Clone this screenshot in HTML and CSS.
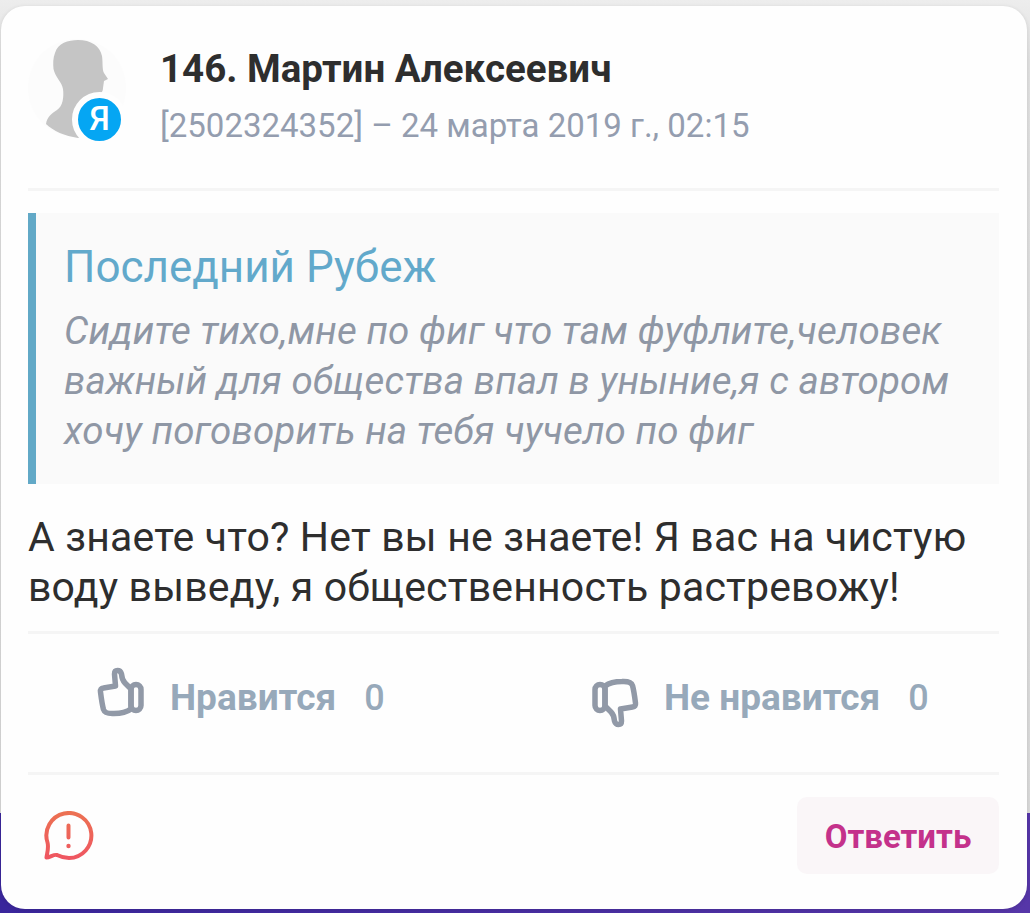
FILE: index.html
```html
<!DOCTYPE html>
<html lang="ru">
<head>
    <meta charset="UTF-8">
    <meta name="viewport" content="width=device-width, initial-scale=1.0">
    <title>Мартин Алексеевич</title>
    <link rel="stylesheet" href="styles.css">
</head>
<body>
    <div class="comment">
        <div class="header">
            <div class="avatar">
                <svg class="avatar-img" viewBox="0 0 98 100">
                    <circle cx="49" cy="50" r="49" fill="#fcfcfc"/>
                    <path fill="#c5c5c5" d="M27 15 C30 5 40 2 50 2 C63 2 72 8 74 18 C75 25 74 31 76 35 L80 41 L76 43 L75 50 C75 54 73 55 70 56 L70 95 L50 100 C37 98 25 93 18 86 C19 79 24 75 29 72 C35 68 36 59 35 51 C34 44 27 39 25.500 31 C25 25 25 20 27 15 Z"/>
                </svg>
                <div class="badge">Я</div>
            </div>
            <div>
                <div class="name">146. Мартин Алексеевич</div>
                <div class="meta">[2502324352] – 24 марта 2019 г., 02:15</div>
            </div>
        </div>
        <div class="quote">
            <div class="quote-author">Последний Рубеж</div>
            <div class="quote-text">Сидите тихо,мне по фиг что там фуфлите,человек<br>важный для общества впал в уныние,я с автором<br>хочу поговорить на тебя чучело по фиг</div>
        </div>
        <div class="text">А знаете что? Нет вы не знаете! Я вас на чистую<br>воду выведу, я общественность растревожу!</div>
        <div class="votes">
            <div class="vote">
                <svg class="vote-icon" viewBox="0 0 48 50">
                    <path d="M3.500 22 Q3 18.500 6.500 18 L18.500 16 L17.500 4 Q17.500 0.500 20.500 0.500 Q23.500 0.500 24.500 4 Q25 10 28 13 L34 19 V39 Q28 43.500 17 43.500 Q8 44 6.500 39.500 Q5 34 3.500 22 Z"/>
                    <rect x="34" y="14.500" width="10" height="26" rx="5"/>
                </svg>
                <span class="vote-label">Нравится</span>
                <span class="vote-count">0</span>
            </div>
            <div class="vote">
                <svg class="vote-icon dislike" viewBox="0 0 48 50">
                    <path d="M3.500 22 Q3 18.500 6.500 18 L18.500 16 L17.500 4 Q17.500 0.500 20.500 0.500 Q23.500 0.500 24.500 4 Q25 10 28 13 L34 19 V39 Q28 43.500 17 43.500 Q8 44 6.500 39.500 Q5 34 3.500 22 Z"/>
                    <rect x="34" y="14.500" width="10" height="26" rx="5"/>
                </svg>
                <span class="vote-label">Не нравится</span>
                <span class="vote-count">0</span>
            </div>
        </div>
        <div class="footer">
            <svg class="report" viewBox="0 0 50 50">
                <defs>
                    <linearGradient id="reportColor" gradientUnits="userSpaceOnUse" x1="0" y1="0" x2="0" y2="50">
                        <stop offset="0" stop-color="#ec7252"/>
                        <stop offset="1" stop-color="#ef5562"/>
                    </linearGradient>
                </defs>
                <g fill="none" stroke="url(#reportColor)" stroke-width="4" stroke-linecap="round" stroke-linejoin="round">
                    <path d="M13 44 C17 46 20 47 25 47 A22.500 22.500 0 1 0 3.500 31.500 C5 37 3 42 2.500 46.500 C6 46.500 10 43 13 44 Z"/>
                    <path d="M24.500 14.500 L24.490 26.500"/>
                </g>
                <circle cx="24.500" cy="35" r="2.200" fill="url(#reportColor)"/>
            </svg>
            <button class="reply">Ответить</button>
        </div>
    </div>
</body>
</html>
```
FILE: styles.css
```css
* {
    box-sizing: border-box;
}
body {
    margin: 0;
    height: 913px;
    padding: 6px 3px 4px 1px;
    overflow: hidden;
    font-family: Roboto, sans-serif;
    background: linear-gradient(#ededed, #e0e0e0 60px, #d9d9d9 813px, transparent 813px), linear-gradient(90deg, #3a269c, #5636a8);
}
.comment {
    height: 903px;
    padding: 0 28px 0 27px;
    background-color: #fefefe;
    border-radius: 24px;
    box-shadow: 0 1px 4px rgba(0, 0, 0, 0.12);
}
.header {
    display: flex;
    height: 185px;
    padding-top: 32px;
    border-bottom: 3px solid #f5f5f5;
}
.avatar {
    position: relative;
    width: 100px;
    height: 100px;
    margin-right: 32px;
}
.avatar-img {
    display: block;
    width: 98px;
    height: 100px;
}
.badge {
    position: absolute; /* sits over the avatar corner */
    left: 44px;
    top: 54px;
    width: 55px;
    height: 55px;
    border: 6px solid #fefefe;
    border-radius: 50%;
    background-color: #05a6f3;
    color: white;
    font-size: 33px;
    font-weight: 500;
    line-height: 41px;
    text-align: center;
}
.name {
    margin-top: 6px;
    font-size: 38.5px;
    font-weight: 700;
    line-height: 50px;
    color: #2e2e2e;
    white-space: nowrap;
}
.meta {
    margin-top: 7px;
    font-size: 33px;
    line-height: 50px;
    color: #949daf;
    white-space: nowrap;
}
.quote {
    height: 271px;
    margin-top: 22px;
    padding: 28px;
    border-left: 8px solid #62a9c7;
    background-color: #fafafa;
    white-space: nowrap;
}
.quote-author {
    font-size: 44px;
    line-height: 52px;
    color: #62a9cb;
}
.quote-text {
    margin-top: 13px;
    font-size: 38.5px;
    font-style: italic;
    letter-spacing: 0.12px;
    line-height: 50px;
    color: #8f97a5;
}
.text {
    margin-top: 28px;
    font-size: 41px;
    letter-spacing: 0.18px;
    line-height: 50px;
    color: #2e2e2e;
    white-space: nowrap;
}
.votes {
    display: flex;
    height: 144px;
    margin-top: 19px;
    border-top: 3px solid #f5f5f5;
    border-bottom: 3px solid #f5f5f5;
}
.vote {
    display: flex;
    flex: none;
    width: 494px;
    padding: 36px 0 0 69px;
    line-height: 56px;
    color: #97a9ba;
    white-space: nowrap;
}
.vote-icon {
    flex: none;
    width: 48px;
    height: 50px;
    margin-right: 25px;
    overflow: visible;
    fill: none;
    stroke: #9199a7;
    stroke-width: 5.500;
    stroke-linejoin: round;
}
.dislike {
    margin-top: 5px;
    transform: rotate(180deg);
}
.vote-label {
    font-size: 37px;
    font-weight: 700;
}
.vote-count {
    margin-left: 28px;
    font-size: 36px;
    font-weight: 500;
}
.footer {
    display: flex;
    justify-content: space-between;
    padding: 22px 0 0 16px;
}
.report {
    width: 50px;
    height: 50px;
    margin-top: 14px;
}
.reply {
    width: 202px;
    height: 77px;
    padding: 2px 0 0;
    border: none;
    border-radius: 10px;
    background-color: #faf6f8;
    color: #c4318b;
    font-family: inherit;
    font-size: 33px;
    font-weight: 700;
    cursor: pointer;
}
```
